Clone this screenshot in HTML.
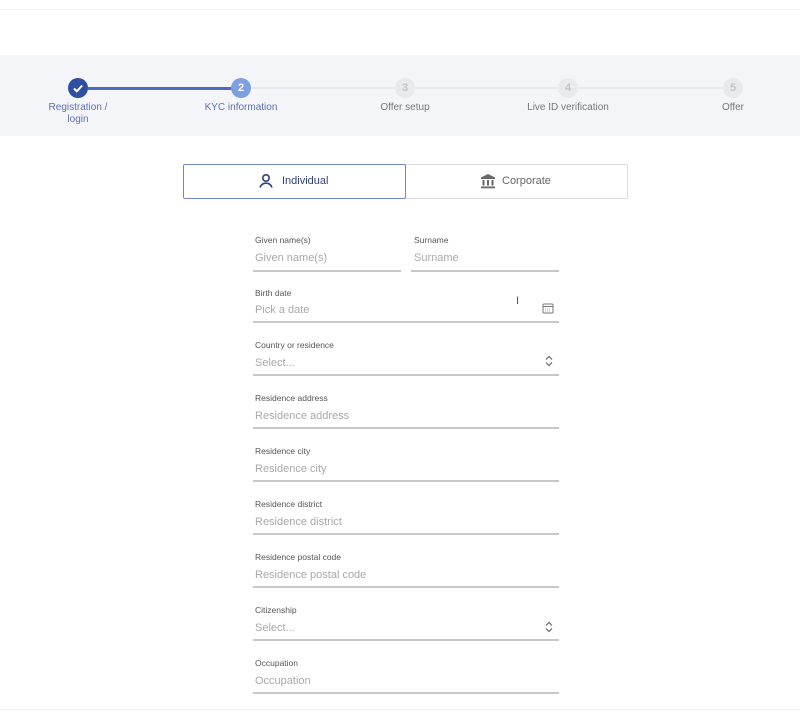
<!DOCTYPE html>
<html><head><meta charset="utf-8"><style>
*{margin:0;padding:0;box-sizing:border-box}
body{width:800px;height:718px;background:#fff;position:relative;overflow:hidden;font-family:"Liberation Sans",sans-serif}
.a{position:absolute}
.band{left:0;top:55px;width:800px;height:81px;background:#f4f5f8}
.c{width:20px;height:20px;border-radius:50%;text-align:center;line-height:20px;font-size:11px;font-weight:bold;color:#fff}
.lbl{font-size:10px;color:#777;text-align:center;width:140px;line-height:12px}
.fl{font-size:8.5px;color:#555}
.ph{font-size:11px;color:#a8a8a8}
.ul{height:2px;background:#c8c8c8}
</style></head><body>
<div class="a" style="left:0;top:9px;width:800px;height:1px;background:#f0f0f0"></div>
<div class="band a"></div>
<div class="a" style="left:88px;top:87px;width:154px;height:3px;background:#4a6bc0"></div>
<div class="a" style="left:251px;top:87px;width:472px;height:2px;background:#e8e9ec"></div>
<div class="a c" style="left:68px;top:78px;background:#2f4fa0"><svg width="20" height="20" viewBox="0 0 20 20"><path d="M6 10.5l2.8 2.8L14.2 7.5" fill="none" stroke="#fff" stroke-width="2"/></svg></div>
<div class="a c" style="left:231px;top:78px;background:#7ea0e0">2</div>
<div class="a c" style="left:395px;top:78px;background:#e9eaee;color:#c4c4c8">3</div>
<div class="a c" style="left:558px;top:78px;background:#e9eaee;color:#c4c4c8">4</div>
<div class="a c" style="left:723px;top:78px;background:#e9eaee;color:#c4c4c8">5</div>
<div class="a lbl" style="left:8px;top:102px;color:#5a72b5">Registration /<br>login</div>
<div class="a lbl" style="left:171px;top:102px;color:#5a72b5">KYC information</div>
<div class="a lbl" style="left:335px;top:102px">Offer setup</div>
<div class="a lbl" style="left:498px;top:102px">Live ID verification</div>
<div class="a lbl" style="left:663px;top:102px">Offer</div>

<div class="a" style="left:405px;top:164px;width:223px;height:35px;border:1px solid #dcdcdc;border-left:none;border-radius:0 2px 2px 0"></div>
<div class="a" style="left:183px;top:164px;width:223px;height:35px;border:1px solid #6f88c8;border-radius:2px"></div>
<div class="a" style="left:258px;top:173px;font-size:11px;color:#2f3f7a;display:flex;align-items:center;gap:8px">
<svg width="16" height="16" viewBox="0 0 16 16"><circle cx="8" cy="5" r="3.2" fill="none" stroke="#2f3f7a" stroke-width="1.6"/><path d="M2 14.5c1-3 3.5-4.3 6-4.3s5 1.3 6 4.3" fill="none" stroke="#2f3f7a" stroke-width="1.6"/></svg>Individual</div>
<div class="a" style="left:480px;top:173px;font-size:11px;color:#666;display:flex;align-items:center;gap:6px">
<svg width="16" height="16" viewBox="0 0 16 16" fill="#666"><path d="M8 1L1 4.5V6h14V4.5z"/><rect x="2.5" y="7" width="2" height="5.5"/><rect x="7" y="7" width="2" height="5.5"/><rect x="11.5" y="7" width="2" height="5.5"/><rect x="1" y="13.5" width="14" height="1.8"/></svg>Corporate</div>

<div class="a fl" style="left:255px;top:235px">Given name(s)</div>
<div class="a ph" style="left:255px;top:252px">Given name(s)</div>
<div class="a ul" style="left:253px;top:270px;width:148px"></div>
<div class="a fl" style="left:414px;top:235px">Surname</div>
<div class="a ph" style="left:414px;top:252px">Surname</div>
<div class="a ul" style="left:411px;top:270px;width:148px"></div>

<div class="a fl" style="left:255px;top:288px">Birth date</div>
<div class="a ph" style="left:255px;top:304px">Pick a date</div>
<div class="a" style="left:516px;top:295px;font-size:11px;color:#555">I</div>
<svg class="a" style="left:542px;top:302px" width="12" height="12" viewBox="0 0 12 12"><rect x="1" y="2" width="10" height="9" rx="1" fill="none" stroke="#777"/><line x1="1" y1="4.5" x2="11" y2="4.5" stroke="#777"/><path d="M3 7h6M3 9h6" stroke="#aaa" stroke-dasharray="1 1"/></svg>
<div class="a ul" style="left:253px;top:321px;width:306px"></div>

<div class="a fl" style="left:255px;top:340px">Country or residence</div>
<div class="a ph" style="left:255px;top:357px">Select...</div>
<svg class="a" style="left:544px;top:355px" width="10" height="12" viewBox="0 0 10 12"><path d="M2 4.5L5 1.5 8 4.5M2 7.5L5 10.5 8 7.5" fill="none" stroke="#666" stroke-width="1.2"/></svg>
<div class="a ul" style="left:253px;top:374px;width:306px"></div>

<div class="a fl" style="left:255px;top:393px">Residence address</div>
<div class="a ph" style="left:255px;top:410px">Residence address</div>
<div class="a ul" style="left:253px;top:427px;width:306px"></div>

<div class="a fl" style="left:255px;top:446px">Residence city</div>
<div class="a ph" style="left:255px;top:463px">Residence city</div>
<div class="a ul" style="left:253px;top:480px;width:306px"></div>

<div class="a fl" style="left:255px;top:499px">Residence district</div>
<div class="a ph" style="left:255px;top:516px">Residence district</div>
<div class="a ul" style="left:253px;top:533px;width:306px"></div>

<div class="a fl" style="left:255px;top:552px">Residence postal code</div>
<div class="a ph" style="left:255px;top:569px">Residence postal code</div>
<div class="a ul" style="left:253px;top:586px;width:306px"></div>

<div class="a fl" style="left:255px;top:605px">Citizenship</div>
<div class="a ph" style="left:255px;top:622px">Select...</div>
<svg class="a" style="left:544px;top:621px" width="10" height="12" viewBox="0 0 10 12"><path d="M2 4.5L5 1.5 8 4.5M2 7.5L5 10.5 8 7.5" fill="none" stroke="#666" stroke-width="1.2"/></svg>
<div class="a ul" style="left:253px;top:639px;width:306px"></div>

<div class="a fl" style="left:255px;top:658px">Occupation</div>
<div class="a ph" style="left:255px;top:675px">Occupation</div>
<div class="a ul" style="left:253px;top:692px;width:306px"></div>
<div class="a" style="left:0;top:709px;width:800px;height:1px;background:#f0f0f0"></div>
</body></html>
